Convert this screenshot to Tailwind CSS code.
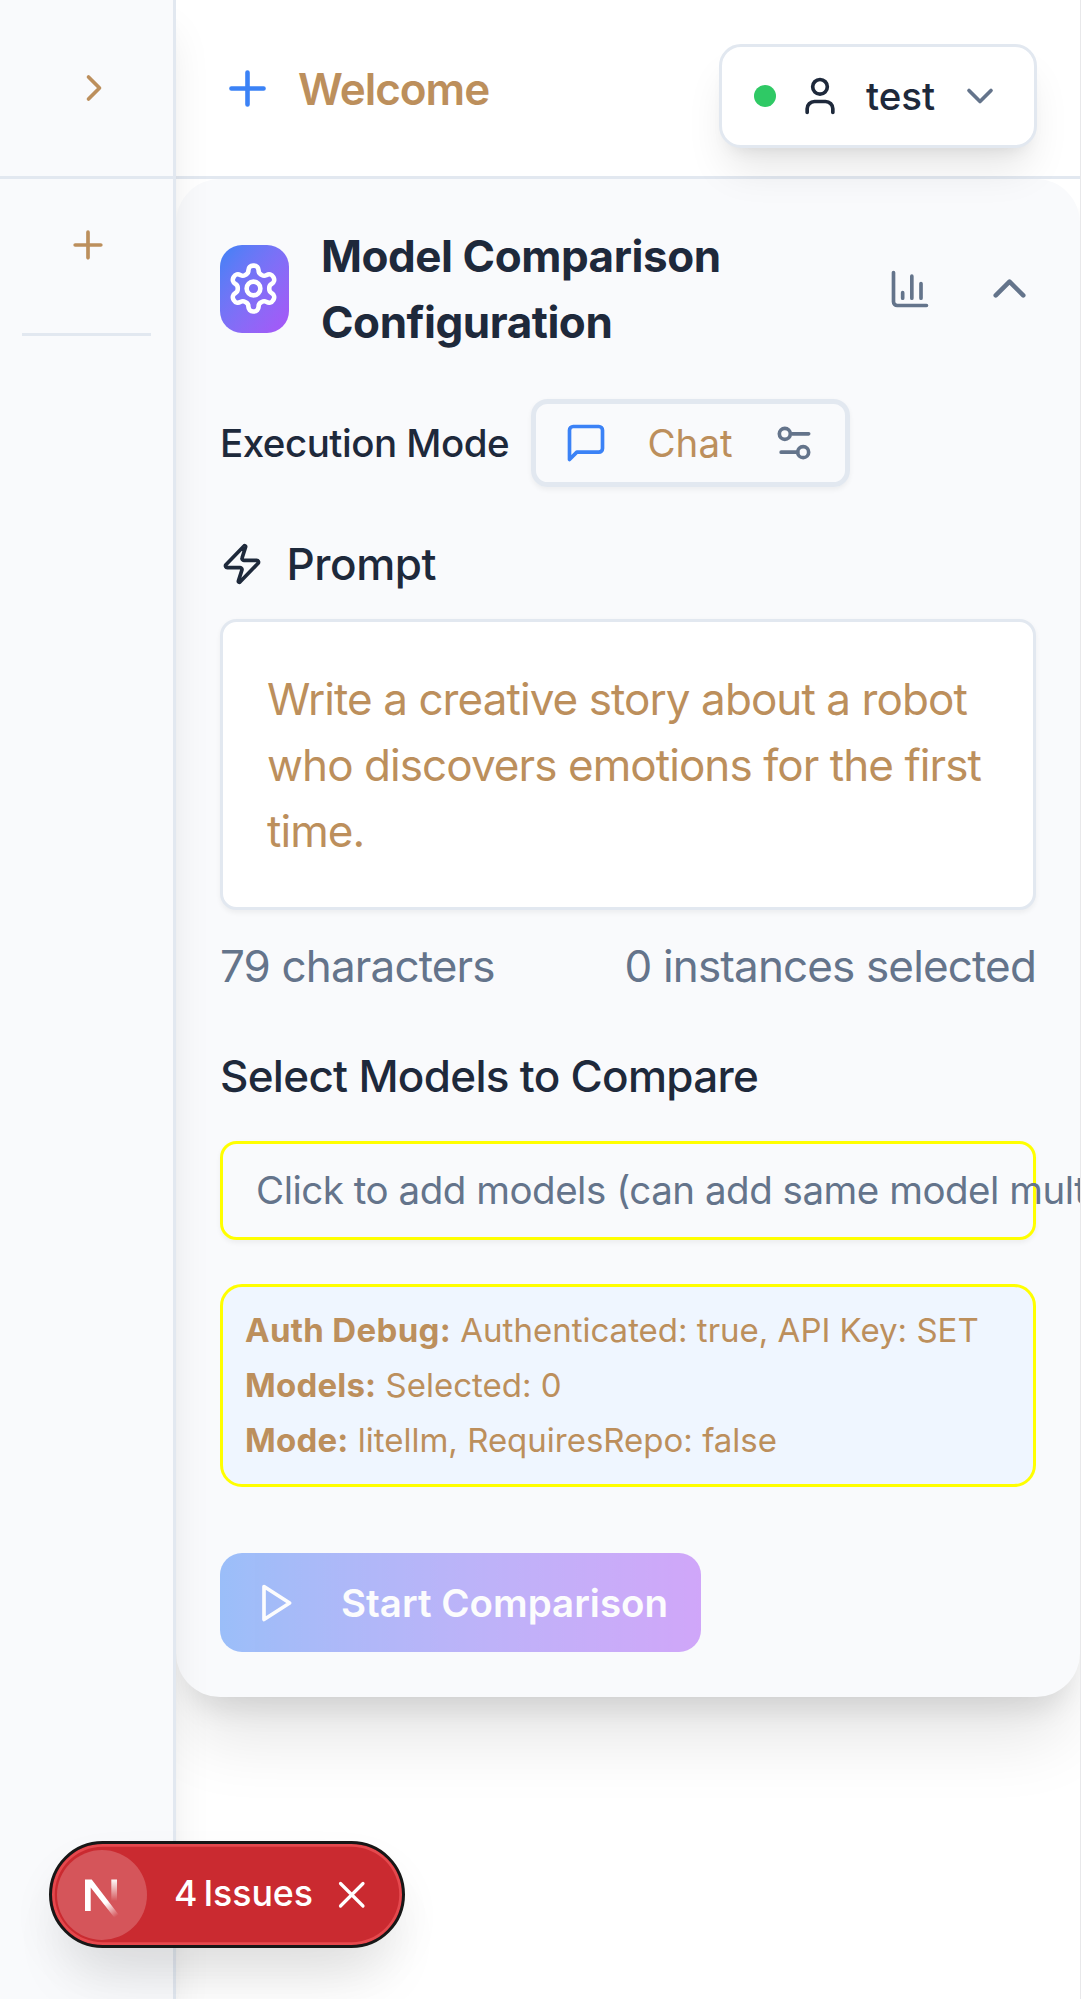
<!DOCTYPE html>
<html lang="en">
<head>
<meta charset="utf-8">
<title>Model Comparison</title>
<script src="https://cdn.jsdelivr.net/npm/@tailwindcss/browser@4"></script>
</head>
<body class="relative flex h-[1999px] w-[1081px] overflow-hidden bg-white font-['Inter',sans-serif] text-[44px] leading-[66px] text-[#bc8f5c]">
  <aside class="relative z-10 flex w-[176px] shrink-0 flex-col border-r-[3px] border-[#e2e8f0] bg-[#f9fafc] shadow-[0_27.5px_41.25px_-8.25px_rgba(0,0,0,0.1),0_11px_16.5px_-11px_rgba(0,0,0,0.1)]">
    <div class="flex h-[179px] items-center justify-center border-b-[3px] border-[#e2e8f0] pl-[14px]">
      <svg class="size-[44px]" viewBox="0 0 24 24" fill="none" stroke="currentColor" stroke-width="2" stroke-linecap="round" stroke-linejoin="round"><path d="m9 18 6-6-6-6"/></svg>
    </div>
    <div class="mx-[22px] flex h-[156.500px] justify-center border-b-[3px] border-[#e2e8f0] pt-[44px]">
      <svg class="ml-[2px] size-[44px]" viewBox="0 0 24 24" fill="none" stroke="currentColor" stroke-width="2" stroke-linecap="round" stroke-linejoin="round"><path d="M5 12h14M12 5v14"/></svg>
    </div>
  </aside>

  <main class="flex w-[904px] shrink-0 flex-col">
    <header class="relative z-[5] flex h-[179px] shrink-0 items-start justify-between border-b-[3px] border-[#e2e8f0] pl-[44px] pr-[43.500px] pt-[44px]">
      <div class="flex h-[88px] items-center">
        <svg class="size-[55px] text-[#3b82f6]" viewBox="0 0 24 24" fill="none" stroke="currentColor" stroke-width="2" stroke-linecap="round" stroke-linejoin="round"><path d="M5 12h14M12 5v14"/></svg>
        <span class="ml-[23px] mt-px font-semibold tracking-[-1px]">Welcome</span>
      </div>
      <button class="flex h-[103.5px] w-[318px] items-center rounded-[22px] border-[3px] border-[#e2e8f0] bg-white pl-[32px] text-[38.5px] font-medium text-[#1e293b] shadow-[0_27.5px_41.25px_-8.25px_rgba(0,0,0,0.1),0_11px_16.5px_-11px_rgba(0,0,0,0.1)]">
        <span class="size-[22px] rounded-full bg-[#2fc965]"></span>
        <svg class="ml-[22px] size-[44px]" viewBox="0 0 24 24" fill="none" stroke="currentColor" stroke-width="2" stroke-linecap="round" stroke-linejoin="round"><path d="M19 21v-2a4 4 0 0 0-4-4H9a4 4 0 0 0-4 4v2"/><circle cx="12" cy="7" r="4"/></svg>
        <span class="ml-[24px] w-[70px]">test</span>
        <svg class="ml-[22px] size-[44px] text-[#64748b]" viewBox="0 0 24 24" fill="none" stroke="currentColor" stroke-width="2" stroke-linecap="round" stroke-linejoin="round"><path d="m6 9 6 6 6-6"/></svg>
      </button>
    </header>

    <section class="flex h-[1518px] shrink-0 flex-col rounded-[44px] bg-[#f9fafc] px-[44px] pt-[43.500px] shadow-[0_55px_68.75px_-13.75px_rgba(0,0,0,0.1),0_22px_27.5px_-11px_rgba(0,0,0,0.1)]">
      <div class="flex h-[132px] items-center">
        <div class="flex h-[88px] w-[69px] items-center justify-center rounded-[22px] bg-linear-to-br from-[#3b82f6] to-[#a855f7] pr-[3px] text-white">
          <svg class="size-[55px] shrink-0" viewBox="0 0 24 24" fill="none" stroke="currentColor" stroke-width="2" stroke-linecap="round" stroke-linejoin="round"><path d="M12.22 2h-.44a2 2 0 0 0-2 2v.18a2 2 0 0 1-1 1.73l-.43.25a2 2 0 0 1-2 0l-.15-.08a2 2 0 0 0-2.73.73l-.22.38a2 2 0 0 0 .73 2.73l.15.1a2 2 0 0 1 1 1.72v.51a2 2 0 0 1-1 1.74l-.15.09a2 2 0 0 0-.73 2.73l.22.38a2 2 0 0 0 2.73.73l.15-.08a2 2 0 0 1 2 0l.43.25a2 2 0 0 1 1 1.73V20a2 2 0 0 0 2 2h.44a2 2 0 0 0 2-2v-.18a2 2 0 0 1 1-1.73l.43-.25a2 2 0 0 1 2 0l.15.08a2 2 0 0 0 2.73-.73l.22-.39a2 2 0 0 0-.73-2.73l-.15-.08a2 2 0 0 1-1-1.74v-.5a2 2 0 0 1 1-1.74l.15-.09a2 2 0 0 0 .73-2.73l-.22-.38a2 2 0 0 0-2.73-.73l-.15.08a2 2 0 0 1-2 0l-.43-.25a2 2 0 0 1-1-1.73V4a2 2 0 0 0-2-2z"/><circle cx="12" cy="12" r="3"/></svg>
        </div>
        <h2 class="ml-[32px] w-[440px] font-bold tracking-[-0.45px] text-[#1e293b]">Model Comparison Configuration</h2>
        <svg class="ml-auto size-[44px] text-[#64748b]" viewBox="0 0 24 24" fill="none" stroke="currentColor" stroke-width="2" stroke-linecap="round" stroke-linejoin="round"><path d="M3 3v16a2 2 0 0 0 2 2h16M18 17V9M13 17V5M8 17v-3"/></svg>
        <svg class="-mr-[0.500px] ml-[49.500px] size-[55px] text-[#64748b]" viewBox="0 0 24 24" fill="none" stroke="currentColor" stroke-width="2" stroke-linecap="round" stroke-linejoin="round"><path d="m18 15-6-6-6 6"/></svg>
      </div>

      <div class="mt-[44px] flex h-[88px] items-center text-[38.5px]">
        <span class="w-[311px] whitespace-nowrap font-medium tracking-[-0.5px] text-[#1e293b]">Execution Mode</span>
        <div class="flex h-[88px] w-[318.500px] items-center rounded-[16.5px] border-[5.5px] border-[#e2e8f0] pl-[27.5px] shadow-[0_2.75px_5.5px_rgba(0,0,0,0.05)]">
          <svg class="size-[44px] text-[#3b82f6]" viewBox="0 0 24 24" fill="none" stroke="currentColor" stroke-width="2" stroke-linecap="round" stroke-linejoin="round"><path d="M21 15a2 2 0 0 1-2 2H7l-4 4V5a2 2 0 0 1 2-2h14a2 2 0 0 1 2 2z"/></svg>
          <span class="ml-[40px] w-[86px]">Chat</span>
          <svg class="ml-[38px] size-[44px] text-[#64748b]" viewBox="0 0 24 24" fill="none" stroke="currentColor" stroke-width="2" stroke-linecap="round" stroke-linejoin="round"><path d="M20 7h-9M14 17H5"/><circle cx="17" cy="17" r="3"/><circle cx="7" cy="7" r="3"/></svg>
        </div>
      </div>

      <div class="mt-[44px] flex h-[66px] items-center font-medium text-[#1e293b]">
        <svg class="size-[44px]" viewBox="0 0 24 24" fill="none" stroke="currentColor" stroke-width="2" stroke-linecap="round" stroke-linejoin="round"><path d="M4 14a1 1 0 0 1-.78-1.63l9.9-10.2a.5.5 0 0 1 .86.46l-1.92 6.02A1 1 0 0 0 13 10h7a1 1 0 0 1 .78 1.63l-9.9 10.2a.5.5 0 0 1-.86-.46l1.92-6.02A1 1 0 0 0 11 14z"/></svg>
        <span class="ml-[22.500px] tracking-[-0.45px]">Prompt</span>
      </div>
      <div class="mt-[22px] h-[291px] shrink-0 whitespace-nowrap rounded-[16.5px] border-[3px] border-[#e2e8f0] bg-white px-[44px] pt-[44px] tracking-[-0.93px] shadow-[0_2.75px_5.5px_rgba(0,0,0,0.05)]">Write a creative story about a robot<br>who discovers emotions for the first<br>time.</div>
      <div class="mt-[23px] flex justify-between tracking-[-0.86px] text-[#64748b]">
        <span>79 characters</span><span>0 instances selected</span>
      </div>

      <h3 class="mt-[44px] font-medium tracking-[-0.7px] text-[#1e293b]">Select Models to Compare</h3>
      <div class="mt-[32px] flex h-[99px] shrink-0 items-center whitespace-nowrap rounded-[16.5px] border-[3px] border-[#ffff00] pl-[33px] text-[38.5px] tracking-[-0.48px] text-[#64748b] shadow-[0_2.75px_5.5px_rgba(0,0,0,0.05)]">Click to add models (can add same model multiple times)</div>
      <div class="mt-[44px] h-[203.5px] shrink-0 whitespace-nowrap rounded-[22px] border-[3px] border-[#ffff00] bg-[#eff6ff] px-[22px] pt-[16.5px] text-[33px] leading-[55px]">
        <p><strong class="tracking-[0.33px]">Auth Debug:</strong> Authenticated: true, API Key: SET</p>
        <p><strong class="tracking-[0.2px]">Models:</strong> Selected: 0</p>
        <p><strong class="tracking-[0.2px]">Mode:</strong> litellm, RequiresRepo: false</p>
      </div>

      <button class="mt-[66px] flex h-[99px] w-[481px] shrink-0 items-center rounded-[22px] bg-linear-to-r from-[#3b82f6] to-[#a855f7] pl-[33px] text-[38.5px] font-semibold text-white opacity-50">
        <svg class="size-[44px]" viewBox="0 0 24 24" fill="none" stroke="currentColor" stroke-width="2" stroke-linecap="round" stroke-linejoin="round"><path d="m6 3 14 9-14 9z"/></svg>
        <span class="ml-[44px] whitespace-nowrap">Start Comparison</span>
      </button>
    </section>
  </main>
  <div class="w-px shrink-0 bg-[#e8e8ea]"></div>

  <div class="absolute left-[49px] top-[1841px] z-20 flex h-[107px] w-[356px] items-center rounded-full border-[3px] border-[#171717] bg-[#ca2a30] pl-[5px] text-[35.75px] font-medium text-white shadow-[inset_0_0_0_2.75px_#e5484d,0_44px_66px_-22px_rgba(0,0,0,0.1),0_22px_44px_rgba(0,0,0,0.06)]">
    <span class="flex size-[90px] items-center justify-center rounded-full bg-[#d5555a]">
      <svg class="size-[90px]" viewBox="0 0 90 90" fill="none">
        <defs>
          <linearGradient id="slant" x1="50" y1="52" x2="60" y2="66" gradientUnits="userSpaceOnUse"><stop stop-color="#fff"/><stop offset="1" stop-color="#fff" stop-opacity="0"/></linearGradient>
          <linearGradient id="stem" x1="57" y1="29" x2="57" y2="51" gradientUnits="userSpaceOnUse"><stop stop-color="#fff"/><stop offset="1" stop-color="#fff" stop-opacity="0"/></linearGradient>
        </defs>
        <path d="M28 29.500h6.700l27.600 36-4 3.300-24.600-31.300V61H28z" fill="url(#slant)"/>
        <path d="M54.300 29.500h5.700V51h-5.700z" fill="url(#stem)"/>
      </svg>
    </span>
    <span class="mb-[3px] ml-[27px]">4</span><span class="mb-[3px] ml-[6px] tracking-[-0.1px]">Issues</span>
    <svg class="mb-px ml-[22.500px] size-[33px]" viewBox="0 0 33 33" stroke="currentColor" stroke-width="3.200" stroke-linecap="round"><path d="M5.500 5.500l22.500 22.500M28 5.500L5.500 28"/></svg>
  </div>
</body>
</html>
